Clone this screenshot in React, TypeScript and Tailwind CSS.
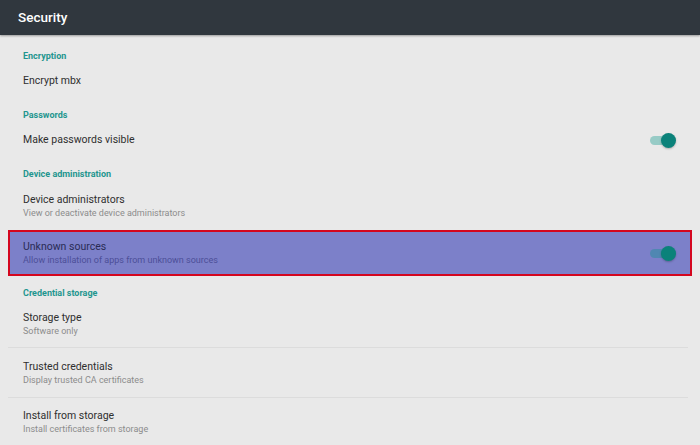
import React from 'react';

const Category: React.FC<{ label: string; className?: string }> = ({ label, className = '' }) => (
  <div className={`h-[24px] flex items-center pl-[23px] text-[9px] font-bold text-[#1f968f] ${className}`}>
    {label}
  </div>
);

const Toggle: React.FC = () => (
  <div className="relative w-[26px] h-[16px] flex items-center">
    <div className="absolute left-0 right-[4px] h-[9px] rounded-full bg-[#009688]/35" />
    <div className="absolute right-0 w-[15px] h-[15px] rounded-full bg-[#0b827a] shadow-[0_1px_2px_rgba(0,0,0,0.25)]" />
  </div>
);

interface ItemProps {
  title: string;
  subtitle?: string;
  toggle?: boolean;
  className?: string;
  highlight?: boolean;
}

const Item: React.FC<ItemProps> = ({ title, subtitle, toggle, className = '', highlight }) => (
  <div className={`flex items-center justify-between pl-[23px] pr-[24px] ${className}`}>
    <div className="flex flex-col">
      <span className={`text-[10.5px] leading-[14px] ${highlight ? 'text-[#2a2c55]' : 'text-[#2f2f2f]'}`}>{title}</span>
      {subtitle && (
        <span className={`text-[9px] leading-[12px] ${highlight ? 'text-[#4c4f98]' : 'text-[#8c8c8c]'}`}>{subtitle}</span>
      )}
    </div>
    {toggle && <Toggle />}
  </div>
);

const Divider: React.FC = () => <div className="h-px ml-[8px] mr-[12px] bg-[#dcdcdc]" />;

export default function App() {
  return (
    <div className="w-[700px] h-[445px] overflow-hidden bg-[#e9e9e9] font-['Roboto',sans-serif]">
      <header className="h-[35px] bg-[#30373e] flex items-center pl-[18px] shadow-[0_1px_2px_rgba(0,0,0,0.35)] relative">
        <h1 className="text-[13.5px] font-medium text-white">Security</h1>
      </header>

      <div className="pt-[10px]">
        <Category label="Encryption" />
        <Item title="Encrypt mbx" className="h-[24px]" />

        <Category label="Passwords" className="mt-[11px]" />
        <Item title="Make passwords visible" toggle className="h-[24px]" />

        <Category label="Device administration" className="mt-[11px]" />
        <Item
          title="Device administrators"
          subtitle="View or deactivate device administrators"
          className="h-[37px]"
        />

        <div className="mt-[6px] mx-[8px] h-[46px] border-2 border-[#d4061e] bg-[#7c80c9] flex items-center">
          <Item
            title="Unknown sources"
            subtitle="Allow installation of apps from unknown sources"
            toggle
            highlight
            className="flex-1 !pl-[13px] !pr-[14px]"
          />
        </div>

        <Category label="Credential storage" className="mt-[6px]" />
        <Item title="Storage type" subtitle="Software only" className="h-[41px] !items-start pt-[5px]" />
        <Divider />
        <Item
          title="Trusted credentials"
          subtitle="Display trusted CA certificates"
          className="h-[49px]"
        />
        <Divider />
        <Item
          title="Install from storage"
          subtitle="Install certificates from storage"
          className="h-[48px]"
        />
      </div>
    </div>
  );
}
